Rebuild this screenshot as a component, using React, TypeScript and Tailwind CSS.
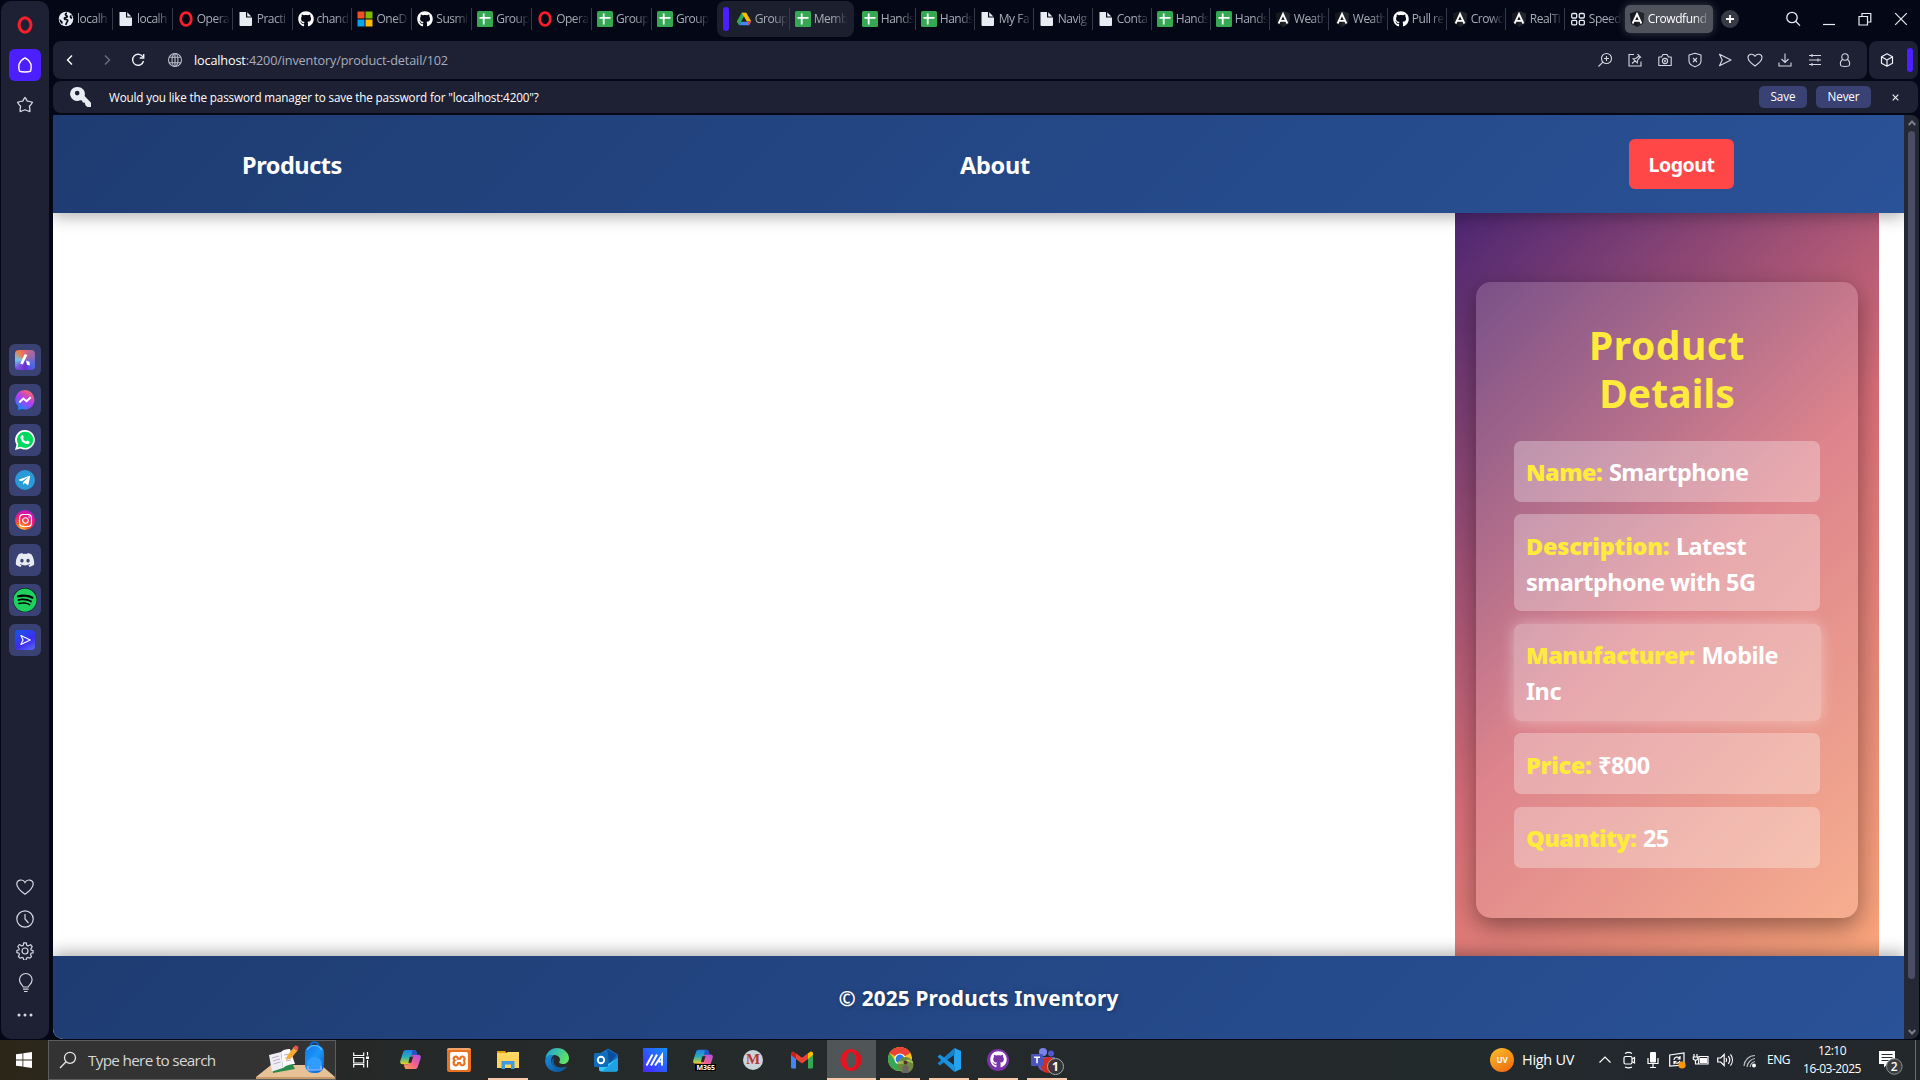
import React from "react";
import {
  FaGithub,
  FaTelegramPlane,
  FaInstagram,
  FaDiscord,
  FaSpotify,
} from "react-icons/fa";
import { SiXampp } from "react-icons/si";

type IconProps = { className?: string };

const OperaMark = ({ className }: IconProps) => (
  <svg className={className} viewBox="0 0 20 20" fill="none">
    <ellipse cx="10" cy="10" rx="6.6" ry="8" stroke="#fa1e2d" strokeWidth="3.4" />
  </svg>
);

const SheetIcon = () => (
  <svg className="size-4 shrink-0" viewBox="0 0 16 16">
    <rect width="16" height="16" rx="1.5" fill="#34a853" />
    <path d="M2.5 6.8h11M6.7 2.5v11" stroke="#fff" strokeWidth="1.8" />
  </svg>
);

const FileIcon = () => (
  <svg className="size-4 shrink-0" viewBox="0 0 16 16" fill="#e8ebf2">
    <path d="M1.500 1h6.500v5.500H14V14a1 1 0 0 1-1 1H2.500a1 1 0 0 1-1-1z" />
    <path d="M9.200 1.200l4.200 4.200H9.200z" />
  </svg>
);

const WorldIcon = () => (
  <svg className="size-4 shrink-0" viewBox="0 0 16 16">
    <circle cx="8" cy="8" r="7.300" fill="#e8ebf2" />
    <path d="M9 2.200c-2 .3-2 2-.4 2.600 1.400.5.300 1.800-1.300 1.900-1.500.1-1 1.800.4 1.800 2 0 2.600 1 1.500 2.300-.9 1-.8 2.200-1.600 3.100M13.500 4.500c-1.500.6-1.600 2.200.6 2.600" stroke="#040716" strokeWidth="1.700" fill="none" />
    <path d="M1.500 7.800l3.200 3-.4 2.400C2.300 11.900 1.500 10 1.500 7.800z" fill="#040716" />
  </svg>
);

const MicrosoftIcon = () => (
  <svg className="size-4 shrink-0" viewBox="0 0 16 16">
    <path fill="#f25022" d="M.5.5h7v7h-7z" />
    <path fill="#7fba00" d="M8.500.5h7v7h-7z" />
    <path fill="#00a4ef" d="M.5 8.500h7v7h-7z" />
    <path fill="#ffb900" d="M8.500 8.500h7v7h-7z" />
  </svg>
);

const DriveIcon = () => (
  <svg className="size-4 shrink-0" viewBox="0 0 16 16">
    <path d="M5.700 1.800h4.600L5.300 10.500 3 14.200.8 10.400z" fill="#34a853" />
    <path d="M5.700 1.800h4.600l5 8.600h-4.600z" fill="#fbbc04" />
    <path d="M5.200 10.400h10L13 14.200H3z" fill="#4285f4" />
    <path d="M10.800 10.400h4.400L13 14.200z" fill="#ea4335" />
    <path d="M8 5.900l2.600 4.500H5.400z" fill="#1c1f2e" />
  </svg>
);

const AngularIcon = () => (
  <svg className="size-4 shrink-0" viewBox="0 0 16 16">
    <path d="M8 0l7.200 2.600-1.100 10L8 16l-6.100-3.400L.8 2.600z" fill="#17191f" />
    <path d="M8 0l7.200 2.600-1.100 10L8 16z" fill="#23252c" />
    <path d="M3.600 12.500L8 3l4.400 9.500M5.300 9.800h5.400" stroke="#fff" strokeWidth="1.800" fill="none" />
  </svg>
);

const SpeedDialIcon = () => (
  <svg className="size-4 shrink-0" viewBox="0 0 16 16" fill="none" stroke="#e8ebf2" strokeWidth="1.300">
    <rect x="1.700" y="2.500" width="5" height="4.500" rx="1" />
    <rect x="9.300" y="2.500" width="5" height="4.500" rx="1" />
    <rect x="1.700" y="9.300" width="5" height="4.500" rx="1" />
    <rect x="9.300" y="9.300" width="5" height="4.500" rx="1" />
  </svg>
);

const GithubIcon = () => <FaGithub className="size-4 shrink-0 text-white" />;

const favicons = {
  world: WorldIcon,
  file: FileIcon,
  opera: () => <OperaMark className="size-4 shrink-0" />,
  github: GithubIcon,
  ms: MicrosoftIcon,
  sheet: SheetIcon,
  drive: DriveIcon,
  angular: AngularIcon,
  speed: SpeedDialIcon,
};

type TabData = { icon: keyof typeof favicons; label: string };

const leftTabs: TabData[] = [
  { icon: "world", label: "localh" },
  { icon: "file", label: "localh" },
  { icon: "opera", label: "Opera" },
  { icon: "file", label: "Practi" },
  { icon: "github", label: "chand" },
  { icon: "ms", label: "OneD" },
  { icon: "github", label: "Susmi" },
  { icon: "sheet", label: "Group" },
  { icon: "opera", label: "Opera" },
  { icon: "sheet", label: "Group" },
  { icon: "sheet", label: "Group" },
];

const rightTabs: TabData[] = [
  { icon: "sheet", label: "Hands" },
  { icon: "sheet", label: "Hands" },
  { icon: "file", label: "My Fa" },
  { icon: "file", label: "Navig" },
  { icon: "file", label: "Conta" },
  { icon: "sheet", label: "Hands" },
  { icon: "sheet", label: "Hands" },
  { icon: "angular", label: "Weath" },
  { icon: "angular", label: "Weath" },
  { icon: "github", label: "Pull re" },
  { icon: "angular", label: "Crowd" },
  { icon: "angular", label: "RealTi" },
  { icon: "speed", label: "Speed" },
];

function Tab({ tab, last, width }: { tab: TabData; last?: boolean; width: string }) {
  const Icon = favicons[tab.icon];
  return (
    <div className={`flex h-[22px] shrink-0 items-center gap-[3px] border-r pl-[5px] ${width} ${last ? "border-transparent" : "border-[#363945]"}`}>
      <Icon />
      <span className="w-[34px] whitespace-nowrap text-[12px] tracking-[-0.5px] text-[#a9acb6] [mask-image:linear-gradient(to_right,black_55%,transparent_98%)]">
        {tab.label}
      </span>
    </div>
  );
}

function TabStrip() {
  return (
    <div className="flex h-[41px] items-start">
      <div className="mt-2 flex">
        {leftTabs.map((t, i) => (
          <Tab key={i} tab={t} width="w-[59.9px]" last={i === leftTabs.length - 1} />
        ))}
      </div>
      <div className="ml-[5px] mt-px flex h-9 w-[137px] items-center rounded-lg bg-[#1c1f2e] pl-1.5">
        <div className="h-6 w-[6px] rounded-full bg-[#4c1fff]" />
        <div className="ml-[2px] flex">
          <Tab tab={{ icon: "drive", label: "Group" }} width="w-[59px]" />
          <Tab tab={{ icon: "sheet", label: "Memb" }} width="w-[60px]" last />
        </div>
      </div>
      <div className="ml-[3px] mt-2 flex">
        {rightTabs.map((t, i) => (
          <Tab key={i} tab={t} width="w-[59px]" last={i === rightTabs.length - 1} />
        ))}
      </div>
      <div className="ml-px mt-[5px] flex h-7 w-[88px] items-center gap-[3px] rounded-[5px] bg-[#50525c] pl-1 shadow-[0_0_10px_rgba(255,255,255,0.22)]">
        <AngularIcon />
        <span className="w-[62px] whitespace-nowrap text-[12px] tracking-[-0.4px] text-white [mask-image:linear-gradient(to_right,black_75%,transparent)]">
          Crowdfund
        </span>
      </div>
      <div className="ml-2 mt-[10px] flex size-[18px] items-center justify-center rounded-full bg-[#373a45]">
        <svg className="size-2.5" viewBox="0 0 10 10" stroke="#fff" strokeWidth="1.800"><path d="M5 1v8M1 5h8" /></svg>
      </div>
      <div className="ml-auto mt-[11px] flex gap-5 pr-[11px] text-[#e8ebf2]">
        <svg className="size-4" viewBox="0 0 16 16" fill="none" stroke="currentColor" strokeWidth="1.300"><circle cx="7" cy="6.500" r="5.200" /><path d="M10.700 10.300l4.300 4.300" /></svg>
        <svg className="size-4" viewBox="0 0 16 16" stroke="currentColor" strokeWidth="1.200"><path d="M2 13.500h12" /></svg>
        <svg className="size-4" viewBox="0 0 16 16" fill="none" stroke="currentColor" strokeWidth="1.200"><path d="M2 5.500h8.500V14H2zM5 5.500V2.500h8.800V11h-3" /></svg>
        <svg className="size-4" viewBox="0 0 16 16" stroke="currentColor" strokeWidth="1.200"><path d="M2.200 2.200l11.600 11.600M13.800 2.200L2.200 13.800" /></svg>
      </div>
    </div>
  );
}

const toolbarIcons: React.ReactNode[] = [
  <><circle cx="9.500" cy="6.500" r="5" /><path d="M5.800 10.200L1.500 14.500M9.500 4v5M7 6.500h5" /></>,
  <><path d="M7 2.500H2v11.500h12V9.500" /><path d="M10.500 2.200l3.500 3.500M12 4L8.800 6.500l-2.600.3 4 4 .4-2.600L13 5.200M8 8.800L5 11.500" /></>,
  <><path d="M1.800 5h2.700L6 2.500h4L11.500 5h2.700v8.500H1.800z" strokeLinejoin="round" /><circle cx="8" cy="9" r="2.600" /><circle cx="8" cy="9" r=".5" /></>,
  <><path d="M8 1.300l6 1.700v6c0 3-3 4.800-6 5.700C5 13.800 2 12 2 9V3z" strokeLinejoin="round" /><path d="M6 6l4 4M10 6l-4 4" /></>,
  <path d="M2.500 2.300L14 8 2.500 13.700 5.200 8z" strokeLinejoin="round" />,
  <path d="M8 14C3 10.500 1 8.300 1 5.500 1 1.800 6 1 8 4.200 10 1 15 1.800 15 5.500 15 8.300 13 10.500 8 14z" />,
  <><path d="M8 1.500v9M4.500 7L8 10.500 11.500 7" /><path d="M2 10.500v3.500h12v-3.500" /></>,
  <><path d="M2 3.500h12M2 8h12M2 12.500h12M5 2v3M11 6.500v3M5 11v3" /></>,
  <><circle cx="8" cy="5" r="3.200" /><path d="M5.500 7.500C3.500 9 3 11 3.600 13.200c.3 1 1.200 1.300 4.400 1.300s4.100-.3 4.400-1.300C13 11 12.500 9 10.500 7.500" /></>,
];

function AddressBar() {
  return (
    <div className="flex h-[38px] gap-[2px] text-[#d5d8e2]">
      <div className="flex w-[1814px] items-center rounded-lg bg-[#1e2133] pl-[9px] pr-[14px]">
        <svg className="size-4" viewBox="0 0 16 16" fill="none" stroke="#fff" strokeWidth="1.400"><path d="M10 3.500L5.500 8l4.500 4.500" /></svg>
        <svg className="ml-[21px] size-4" viewBox="0 0 16 16" fill="none" stroke="#6b6e7c" strokeWidth="1.400"><path d="M6 3.500L10.500 8 6 12.500" /></svg>
        <svg className="ml-[15px] size-4" viewBox="0 0 16 16" fill="none" stroke="#f0f2f8" strokeWidth="1.400"><path d="M13 5.200A5.500 5.500 0 1 0 13.500 9" /><path d="M13.700 2v4H9.700" /></svg>
        <svg className="ml-[21px] size-4" viewBox="0 0 16 16" fill="none" stroke="#b9bcc8" strokeWidth="1.100"><circle cx="8" cy="8" r="6.500" /><ellipse cx="8" cy="8" rx="3" ry="6.500" /><path d="M8 1.500v13M2.200 5.300h11.600M2.200 10.700h11.600" /></svg>
        <div className="ml-[11px] mt-px whitespace-nowrap text-[12.7px] tracking-[-0.16px] text-[#a9adbd]">
          <span className="text-white">localhost</span>:4200/inventory/product-detail/102
        </div>
        <div className="ml-auto flex gap-[14px]">
          {toolbarIcons.map((p, i) => (
            <svg key={i} className="size-4" viewBox="0 0 16 16" fill="none" stroke="currentColor" strokeWidth="1.100">{p}</svg>
          ))}
        </div>
      </div>
      <div className="flex w-[49px] items-center rounded-lg bg-[#1e2133] pl-[10px]">
        <svg className="size-4" viewBox="0 0 16 16" fill="none" stroke="#f0f2f8" strokeWidth="1.200" strokeLinejoin="round"><path d="M8 1.800l5.500 3v6.400L8 14.200l-5.500-3V4.800zM2.500 4.800L8 8l5.500-3.200M8 8v6.200" /></svg>
        <div className="ml-3 h-6 w-[6px] rounded-full bg-[#4c1fff]" />
      </div>
    </div>
  );
}

function PasswordBar() {
  return (
    <div className="mt-[2px] flex h-8 w-[1865px] items-center rounded-lg bg-[#1e2133] pl-[17px] text-white">
      <svg className="size-[22px]" viewBox="0 0 22 22" fill="#e8ebf2">
        <path fillRule="evenodd" d="M8 1a7 7 0 1 0 2.200 13.200l1.800.2.800 2 2 .4.600 2.400 2 1.800h3.600v-4.200L14.600 10A7 7 0 0 0 8 1zm-.8 3.800a2.300 2.300 0 1 1 0 4.600 2.300 2.300 0 0 1 0-4.600z" />
      </svg>
      <span className="ml-[17px] mt-[2px] whitespace-nowrap text-[11.7px] tracking-[-0.155px]">
        Would you like the password manager to save the password for "localhost:4200"?
      </span>
      <button className="ml-auto h-[22px] w-[48px] rounded-[5px] bg-[#3a4274] text-[11.7px] tracking-[-0.1px]">Save</button>
      <button className="ml-[9px] h-[22px] w-[55px] rounded-[5px] bg-[#3a4274] text-[11.7px] tracking-[-0.1px]">Never</button>
      <svg className="ml-[21px] mr-[19px] size-[7px]" viewBox="0 0 7 7" stroke="#e8ebf2" strokeWidth="1.200"><path d="M.7.7l5.600 5.600M6.300.7L.7 6.300" /></svg>
    </div>
  );
}

const sideTile = "flex size-8 items-center justify-center rounded-md bg-[#3a4274]";

function Sidebar() {
  return (
    <div className="ml-px mt-px flex h-[1038px] w-12 flex-col items-center rounded-[10px] bg-[#1e2133]">
      <OperaMark className="mt-[15px] size-[18px]" />
      <div className="mt-[15px] flex size-8 items-center justify-center rounded-md bg-[#4c1fff]">
        <svg className="size-[18px]" viewBox="0 0 18 18" fill="none" stroke="#fff" strokeWidth="1.400" strokeLinejoin="round"><path d="M9 1.800c2.500 1.200 5 3.800 6 6.400.4 2.500.2 5-.5 7-1.800 1-9.200 1-11 0-.7-2-.9-4.500-.5-7C4 5.600 6.500 3 9 1.800z" /></svg>
      </div>
      <svg className="mt-[15px] size-[18px]" viewBox="0 0 18 18" fill="none" stroke="#d5d8e2" strokeWidth="1.300" strokeLinejoin="round"><path d="M9 1.500c1 1 1.700 2.300 2.200 3.600 1.600.1 3.500.5 5.300 1.200-.8 1.500-1.900 2.800-3.100 4 .4 1.700.6 3.500.5 5.200-1.700-.3-3.400-.9-4.900-1.700-1.500.8-3.200 1.400-4.900 1.700-.1-1.700.1-3.500.5-5.200-1.200-1.200-2.300-2.500-3.100-4 1.800-.7 3.700-1.100 5.300-1.200C7.300 3.800 8 2.500 9 1.500z" /></svg>

      <div className="mt-[230px] flex flex-col gap-2">
        <div className={sideTile}>
          <div className="flex size-5 items-center justify-center rounded bg-[conic-gradient(from_0deg,#d9667a,#4a6ae8_35%,#6a2fd0_50%,#7a4fe0_62%,#6ec9e8_75%,#f07a45_90%,#d9667a)]">
            <svg className="size-4" viewBox="0 0 16 16"><path d="M9 2.500L4.500 12" stroke="#fff" strokeWidth="2.800" /><path d="M9 8.500l3.500 1.200.3 3.800-2.800-.8z" fill="#fff" /></svg>
          </div>
        </div>
        <div className={sideTile}>
          <svg className="size-5" viewBox="0 0 20 20">
            <defs><linearGradient id="msgr" x1="0.800" y1="0" x2="0.200" y2="1"><stop offset="0" stopColor="#ff6a5c" /><stop offset=".5" stopColor="#b03cf5" /><stop offset="1" stopColor="#0b8cff" /></linearGradient></defs>
            <path d="M10 0a9.700 9.700 0 1 1-3 19l-3.800 1V16.600A9.700 9.700 0 0 1 10 0z" fill="url(#msgr)" />
            <path d="M4.300 12.500l3.900-4 3.400 2.600 4.200-3.800" stroke="#fff" strokeWidth="2" fill="none" />
          </svg>
        </div>
        <div className={sideTile}>
          <svg className="size-5" viewBox="0 0 20 20">
            <path d="M10.200 0a9.800 9.800 0 1 1-4.700 18.500L0 20l1.500-5.200A9.800 9.800 0 0 1 10.200 0z" fill="#fff" />
            <path d="M10.200 1.700a8.100 8.100 0 1 1-4.300 15L2.500 17.600l.9-3.300A8.100 8.100 0 0 1 10.200 1.700z" fill="#00d95f" />
            <path d="M7 5.200c.6-.3.900 0 1.100.5l.6 1.500c.2.500-.6 1-.7 1.400.6 1.400 1.700 2.400 3.200 3 .5-.1.900-1.200 1.400-1l1.700.9c.5.3.3 1.200-.1 1.700-.8.900-2 1.100-3.200.7C8 13 6 10.800 5.600 8.200c-.1-1.200.4-2.500 1.400-3z" fill="#fff" />
          </svg>
        </div>
        <div className={sideTile}>
          <div className="flex size-5 items-center justify-center rounded-full bg-[#2a9bd7]"><FaTelegramPlane className="-ml-px size-[13px] text-white" /></div>
        </div>
        <div className={sideTile}>
          <div className="flex size-5 items-center justify-center rounded-full bg-[radial-gradient(circle_at_30%_100%,#ffcc40_0%,#ff5a2c_30%,#e8178a_60%,#9b1ff0_100%)]"><FaInstagram className="size-[15px] text-white" /></div>
        </div>
        <div className={sideTile}><FaDiscord className="size-5 text-[#e8ebf2]" /></div>
        <div className={sideTile}>
          <div className="flex size-6 items-center justify-center rounded-full bg-black"><FaSpotify className="size-6 text-[#1ed15e]" /></div>
        </div>
        <div className={sideTile}>
          <div className="flex size-5 items-center justify-center rounded bg-[linear-gradient(150deg,#1757f0,#3d2cf0_60%,#5b6ef5)]">
            <svg className="size-3" viewBox="0 0 16 16" fill="none" stroke="#fff" strokeWidth="1.500" strokeLinejoin="round"><path d="M2.500 2L15 8 2.500 14 5.400 8z" /></svg>
          </div>
        </div>
      </div>

      <div className="mb-[15px] mt-auto flex flex-col items-center gap-[14px] text-[#d5d8e2]">
        <svg className="size-[18px]" viewBox="0 0 18 18" fill="none" stroke="currentColor" strokeWidth="1.200"><path d="M9 16.300C3 12 .8 9.500.8 6 .8 1.600 7 .5 9 4.500c2-4 8.200-2.900 8.200 1.500 0 3.500-2.200 6-8.200 10.300z" /></svg>
        <svg className="size-[18px]" viewBox="0 0 18 18" fill="none" stroke="currentColor" strokeWidth="1.200"><circle cx="9" cy="9" r="8.200" /><path d="M9 4v5l3.500 4" /></svg>
        <svg className="size-[18px]" viewBox="0 0 18 18" fill="none" stroke="currentColor" strokeWidth="1.200" strokeLinejoin="round"><circle cx="9" cy="9" r="3" /><path d="M7.300 3.300L7.700.9h2.600l.4 2.400 1.300.7 2.600-1.300 1.600 2-1.400 2.200.3 1.300 2 .3v2.400l-2 .3-.6 1.300 1 2-1.700 1.700-2.200-.8-1 .6-.4 2H7.700l-.4-2-1-.6-2.300.8-1.600-1.700 1-2L2.900 11l-2-.3V8.300L2.900 8l.3-1.300L1.800 4.500l1.600-2L6 4z" /></svg>
        <svg className="size-[18px] overflow-visible" viewBox="0 0 18 18" fill="none" stroke="currentColor" strokeWidth="1.200"><path d="M7.200 13C7 11 3.500 10 3.500 5.800a6.300 6.300 0 0 1 12.600 0C16.100 10 12.500 11 12.300 13zM7 15.200h5.600M8 17.500h3.600" /></svg>
        <svg className="size-[18px]" viewBox="0 0 18 18" fill="currentColor"><circle cx="3" cy="9" r="1.500" /><circle cx="9" cy="9" r="1.500" /><circle cx="15" cy="9" r="1.500" /></svg>
      </div>
    </div>
  );
}

const details = [
  { label: "Name:", value: "Smartphone", labelClass: "tracking-[-0.55px]" },
  { label: "Description:", value: "Latest smartphone with 5G", labelClass: "tracking-[-0.25px]" },
  { label: "Manufacturer:", value: "Mobile Inc", labelClass: "tracking-[-0.5px]", active: true },
  { label: "Price:", value: "₹800", labelClass: "tracking-[-0.35px]" },
  { label: "Quantity:", value: "25", labelClass: "tracking-[-0.55px]" },
];

function ProductPage() {
  return (
    <div className="flex h-[924px] w-[1851px] flex-col overflow-hidden rounded-bl-[10px] bg-white font-['Noto_Sans',sans-serif] font-bold text-white">
      <header className="z-10 flex h-[98px] shrink-0 items-center bg-[linear-gradient(135deg,#1e3c72,#2a5298)] pl-[189px] shadow-[0_4px_15px_rgba(0,0,0,0.3)]">
        <a className="w-[100px] whitespace-nowrap pt-1 text-[23.5px] tracking-[-0.45px]">Products</a>
        <a className="ml-[618px] w-[72px] whitespace-nowrap pt-1 text-[23.5px] tracking-[-0.25px]">About</a>
        <button className="ml-[597px] h-[50px] w-[105px] rounded-md bg-[#ff4747] pt-px text-[19.5px] tracking-[-0.45px]">Logout</button>
      </header>
      <main className="flex h-[743px] shrink-0 justify-end overflow-hidden pr-[25px]">
        <div className="-mt-[75px] flex h-[924px] w-[424px] items-center justify-center bg-[linear-gradient(135deg,#3a1c71,#d76d77,#ffaf7b)]">
          <section className="h-[636px] w-[382px] rounded-[15px] bg-white/[0.16] px-[38px] pt-[39px] shadow-[0_8px_25px_rgba(0,0,0,0.4)]">
            <h1 className="text-center text-[39px] leading-[48px] text-[#ffeb3b]">
              <span className="tracking-[0.5px]">Product</span>
              <br />
              <span className="tracking-[0.1px]">Details</span>
            </h1>
            <div className="mt-[24px] flex flex-col gap-[12.7px]">
              {details.map((d) => (
                <p
                  key={d.label}
                  className={`rounded-[7px] px-[12px] pb-[11.4px] pt-[13.4px] text-[23.5px] leading-[36px] tracking-[-0.52px] ${
                    d.active ? "mr-[-1px] bg-white/30 shadow-[0_0_15px_rgba(255,255,255,0.4)]" : "bg-white/30"
                  }`}
                >
                  <span className={`font-black text-[#ffeb3b] ${d.labelClass}`}>{d.label}</span> <span className="pl-px">{d.value}</span>
                </p>
              ))}
            </div>
          </section>
        </div>
      </main>
      <footer className="z-10 flex h-[83px] shrink-0 items-center justify-center bg-[linear-gradient(135deg,#1e3c72,#2a5298)] pt-[2px] text-[20.800px] tracking-[0.18px] shadow-[0_-4px_15px_rgba(0,0,0,0.3)] [text-shadow:1px_1px_5px_rgba(0,0,0,0.3)]">
        © 2025 Products Inventory
      </footer>
    </div>
  );
}

function Scrollbar() {
  return (
    <div className="flex h-[924px] w-[15px] flex-col items-center rounded-r-lg bg-[#252936]">
      <svg className="mt-1 size-2" viewBox="0 0 8 8" fill="none" stroke="#7d7f86" strokeWidth="2"><path d="M.7 6L4 2.500 7.300 6" /></svg>
      <div className="mt-1 h-[848px] w-[7px] rounded-full bg-[#4a4e64]" />
      <svg className="mb-[3px] mt-auto size-2" viewBox="0 0 8 8" fill="none" stroke="#7d7f86" strokeWidth="2"><path d="M.7 2L4 5.500 7.300 2" /></svg>
    </div>
  );
}

const CopilotShape = ({ className }: IconProps) => (
  <svg className={className} viewBox="0 0 24 24">
    <defs>
      <linearGradient id="cpA" x1="0" y1="0" x2="0" y2="1"><stop offset="0" stopColor="#1d7fe8" /><stop offset=".5" stopColor="#2bb0b5" /><stop offset="1" stopColor="#e8d21a" /></linearGradient>
      <linearGradient id="cpB" x1="1" y1="0" x2="0" y2="1"><stop offset="0" stopColor="#b04df0" /><stop offset=".5" stopColor="#f0608f" /><stop offset="1" stopColor="#ffa24a" /></linearGradient>
    </defs>
    <path d="M7.500 2h8c2 0 2.500 1.200 3 3l.5 2h-3c-2 0-2.700.8-3.200 2.500l-1.500 5C10.600 16.700 9.800 17 8 17H4C1.500 17 .7 15.500 1.500 13L4.300 4.500C4.900 2.700 5.700 2 7.500 2z" fill="url(#cpA)" />
    <path d="M15.500 7H20c2.500 0 3.300 1.500 2.500 4l-2.800 8.500c-.6 1.800-1.400 2.500-3.200 2.500h-8c-2 0-2.600-1-3-3l-.4-2H8c2 0 2.700-.8 3.200-2.500l1.500-5C13.200 7.700 13.700 7 15.500 7z" fill="url(#cpB)" />
    <path d="M14 2.200h1.500c2 0 2.500 1.200 3 3L19 7h-3.500c-1 0-1.800.3-2.300 1z" fill="#2352c9" />
    <path d="M11.200 9h4.500c-.8.300-1.200.8-1.500 1.800l-1.400 4.500h-3z" fill="#26292a" />
  </svg>
);

const taskbarApps: { icon: React.ReactNode; open?: boolean; active?: boolean }[] = [
  { icon: <CopilotShape className="size-[23px]" /> },
  { icon: <div className="flex size-6 items-center justify-center rounded-[2px] border-t-2 border-[#f2a368] bg-[#e8701f]"><SiXampp className="size-[18px] text-white" /></div> },
  {
    open: true,
    icon: (
      <svg className="size-6" viewBox="0 0 24 24"><path d="M1 3h8l2 2.500H1z" fill="#e8a40c" /><path d="M1 5.200h22V20H1z" fill="#ffd35c" /><path d="M1 5.200h9L12 4h11v3H1z" fill="#ffd968" /><path d="M5.500 13h13v8H15v-4.500H9V21H5.500z" fill="#3d9be0" /></svg>
    ),
  },
  {
    icon: (
      <svg className="size-6" viewBox="0 0 24 24">
        <defs>
          <linearGradient id="edA" x1="0" y1="0" x2="1" y2=".4"><stop offset="0" stopColor="#1b9de0" /><stop offset="1" stopColor="#5fe06a" /></linearGradient>
          <linearGradient id="edB" x1="0" y1="0" x2="1" y2="1"><stop offset="0" stopColor="#1b8de0" /><stop offset="1" stopColor="#0c4f94" /></linearGradient>
        </defs>
        <path d="M.3 11C1 4.500 6 0 12 0c7 0 12 5 12 10 0 4-3 6-6 6-2.500 0-4.500-1-3.500-2.500C16 11 14 7 9.500 7 5 7 1.500 8.500.3 11z" fill="url(#edA)" />
        <path d="M.2 12C.8 8.500 5 6.500 9 7c-2 1.300-3.500 4-2.500 7.500C7.500 19 13 21.500 21.500 19 19.500 22 16 24 12 24 5 24-.3 18.500.2 12z" fill="url(#edB)" />
        <path d="M10 9.500c-3 3-1.500 8.500 4 9.800 3 .6 6 .2 8-1-1 2.200-4 3.600-7 3.400C8 21 5 15 7.500 11z" fill="#12619f" />
      </svg>
    ),
  },
  {
    icon: (
      <svg className="size-6" viewBox="0 0 24 24"><path d="M4 6.500L14 .5l10 6v4l-10 6L4 11z" fill="#1272c4" /><path d="M13 1l10 6-8 9z" fill="#0a4f9e" /><path d="M5 11l9 5 10-6v11.500c0 1-.8 2-2 2H7c-1 0-2-.8-2-2z" fill="#36c5f4" /><path d="M24 10L8 23.500h14c1.200 0 2-1 2-2z" fill="#1fa2e5" /><rect x="0" y="5" width="14" height="14" rx="1.500" fill="#0f6cbd" /><circle cx="7" cy="12" r="3.200" fill="none" stroke="#fff" strokeWidth="1.900" /></svg>
    ),
  },
  {
    icon: (
      <svg className="size-6" viewBox="0 0 24 24">
        <defs><linearGradient id="mA" x1="1" y1="0" x2="0" y2="1"><stop offset="0" stopColor="#0f93ff" /><stop offset="1" stopColor="#4a22ff" /></linearGradient></defs>
        <path d="M0 0h24v24H0z" fill="url(#mA)" /><path d="M3.500 17.500L9.500 6.500M8 17.500l6-11M12 17.500L19 7v10.500M15.500 13.500h3.500" stroke="#fff" strokeWidth="2" fill="none" />
      </svg>
    ),
  },
  {
    icon: (
      <div className="flex flex-col items-end">
        <CopilotShape className="mr-0.5 size-[22px]" />
        <span className="mt-[-6px] bg-black px-px text-[7px] font-bold leading-[7px] text-white">M365</span>
      </div>
    ),
  },
  { icon: <div className="flex size-[20px] items-center justify-center rounded-full bg-[#c9d3dc] font-['Liberation_Serif',serif] text-[15px] font-bold leading-none text-[#b3392f]">M</div> },
  {
    icon: (
      <svg className="size-[22px]" viewBox="0 0 22 22"><path d="M0 5l5 4v10.500H1.500C.6 19.500 0 19 0 18z" fill="#4285f4" /><path d="M17 9l5-4v13c0 1-.6 1.500-1.500 1.500H17z" fill="#34a853" /><path d="M17 4.200l2-1.300c1.500-1 3 .1 3 1.600V6l-5 4z" fill="#fbbc04" /><path d="M5 4.200l6 4.600 6-4.600V10l-6 4.600L5 10z" fill="#ea4335" /><path d="M5 4.200L3 2.900C1.500 1.900 0 3 0 4.500V6l5 4z" fill="#c5221f" /></svg>
    ),
  },
  {
    open: true,
    active: true,
    icon: (
      <svg className="size-6" viewBox="0 0 24 24"><path fillRule="evenodd" d="M12 1c6 0 10.500 5 10.500 11S18 23 12 23 1.500 18 1.500 12 6 1 12 1zm0 3c-2.800 0-4.500 3.800-4.500 8s1.700 8 4.500 8 4.500-3.800 4.500-8-1.700-8-4.500-8z" fill="#e8141f" /><path d="M18.500 4A11 11 0 0 1 12 23c4-1 6.500-5 6.500-11 0-3.500-1.500-6.500-3.500-8z" fill="#c9101c" fillOpacity=".5" /></svg>
    ),
  },
  {
    open: true,
    icon: (
      <svg className="size-[27px] overflow-visible" viewBox="0 0 27 27">
        <circle cx="13" cy="13" r="12" fill="#fbc116" /><path d="M13 13L2.600 7A12 12 0 0 1 23.400 7z" fill="#ea4335" /><path d="M2.600 7A12 12 0 0 0 12 25l5-9.500-8 0z" fill="#34a853" /><circle cx="13" cy="13" r="5.600" fill="#fff" /><circle cx="13" cy="13" r="4.400" fill="#2b7de9" />
        <circle cx="18.500" cy="19" r="8" fill="#6e8a3c" /><path d="M11 17.500c3-3 5 1 8-2s5 1 7 1" stroke="#a9c05a" strokeWidth="2" fill="none" /><circle cx="18.500" cy="16.500" r="2" fill="#4a3526" /><path d="M15.500 27v-6c0-2.500 6-2.500 6 0v6z" fill="#6d6268" />
      </svg>
    ),
  },
  {
    open: true,
    icon: (
      <svg className="size-6" viewBox="0 0 24 24"><path fillRule="evenodd" d="M17.500 0L24 3v18l-6.500 3-.5-6.500V6.500z" fill="#24a4f0" /><path d="M17.500 0L.5 15.200l2.500 2.300L18 6.200z" fill="#1583cc" /><path d="M17.500 24L.5 8.800 3 6.500 18 17.800z" fill="#1b92de" /></svg>
    ),
  },
  { open: true, icon: <div className="flex size-[22px] items-center justify-center rounded-full bg-[#7b33a8]"><FaGithub className="size-[17px] text-white" /></div> },
  {
    open: true,
    icon: (
      <svg className="size-8 overflow-visible" viewBox="0 0 32 32">
        <circle cx="12" cy="8" r="4" fill="#7b83eb" /><circle cx="20" cy="9.500" r="3" fill="#5059c9" /><path d="M7 13h17v8c0 4-4 7-8.500 7S7 25 7 21z" fill="#5b63d3" />
        <circle cx="17.500" cy="21" r="8" fill="#d22d22" /><rect x="0" y="10" width="12" height="12" rx="1" fill="#4b53bc" /><path d="M3 13.300h6M6 13.300v6" stroke="#fff" strokeWidth="1.600" />
        <circle cx="24.500" cy="22.500" r="8" fill="#33373a" fillOpacity=".85" stroke="#a5a8aa" />
        <text x="24.500" y="27" textAnchor="middle" fontSize="12" fontWeight="700" fill="#fff" fontFamily="Open Sans, sans-serif">1</text>
      </svg>
    ),
  },
];

function Taskbar() {
  return (
    <div className="flex h-10 items-center bg-[linear-gradient(to_right,#2c2618_0px,#2b271b_48px,#252827_340px,#252a2b_700px,#232a2c_1500px,#23272f_1700px,#23282a_1920px)] text-white">
      <div className="flex w-12 items-center justify-center">
        <svg className="size-4" viewBox="0 0 16 16" fill="#fff"><path d="M0 2.300L6.500 1.400v6.200H0zM7.300 1.300L16 0v7.600H7.300zM0 8.400h6.500v6.200L0 13.700zM7.300 8.400H16V16l-8.700-1.200z" /></svg>
      </div>
      <div className="flex h-10 w-[288px] items-center border border-[#5e5e5e] bg-[#333] pl-[10px]">
        <svg className="size-[18px]" viewBox="0 0 18 18" fill="none" stroke="#e6e6e6" strokeWidth="1.300"><circle cx="11" cy="6.800" r="5.500" /><path d="M7 10.700L1 17" /></svg>
        <span className="ml-[11px] mt-px whitespace-nowrap text-[15.300px] tracking-[-0.7px] text-[#d8d8d8]">Type here to search</span>
        <svg className="ml-auto h-[38px] w-[79px]" viewBox="0 0 79 38">
          <defs><linearGradient id="bag" x1="0" y1="0" x2="1" y2="1"><stop offset="0" stopColor="#1277e8" /><stop offset=".5" stopColor="#1a97fa" /><stop offset="1" stopColor="#0a55c4" /></linearGradient></defs>
          <path d="M15 24h50l14 12v2H0v-2z" fill="#e8c296" /><path d="M0 36h79v2H0z" fill="#c79a6b" />
          <path d="M14 15l3 17 22-4-3-6z" fill="#2b8a4a" /><path d="M13 14l12-3 2 16-11 3.500z" fill="#f1edf6" /><path d="M25 11c3-3 7-3 9-3l5 15c-5 0-8 1-12 4z" fill="#faf8fc" />
          <path d="M16 17l7-2M17 20l7-2M17.500 23l7-2M28 14l6-1M29 17l6-1M30 20l5-1" stroke="#a9a2b8" strokeWidth=".8" />
          <path d="M30 19l1.500-4.500L38 6l4 3-7 8.500z" fill="#fbab2c" /><path d="M37 7l2-2.300c1-1.100 4.300 1.200 3.400 2.500L41 9.700z" fill="#e8534a" />
          <path d="M54.500 5c0-5 8-5 8 0" stroke="#0b63d1" strokeWidth="2" fill="none" /><rect x="49" y="4" width="19" height="28" rx="8" fill="url(#bag)" /><path d="M51 9c4-6 11-6 15 0" stroke="#62c4ff" strokeWidth="1.200" fill="none" /><path d="M51 22c2-8 13-8 15 0v7H51z" fill="#2f9dff" /><path d="M52 25v4h13v-4" stroke="#a9b5ff" strokeWidth="1.200" fill="none" />
        </svg>
      </div>
      <div className="flex w-[49.500px] items-center justify-center">
        <svg className="size-4" viewBox="0 0 16 16" fill="none" stroke="#fff" strokeWidth="1.200"><path d="M.7.5v3h10v-3M.7 5.500h10v5.500H.7zM.7 15.500v-3h10v3M14.500 0v3.500M14.500 8v7.500" /><path d="M13 4.500h3v2.500h-3z" fill="#fff" stroke="none" /></svg>
      </div>
      <div className="flex h-10">
        {taskbarApps.map((a, i) => (
          <div key={i} className={`flex h-10 w-[49px] flex-col items-center ${a.active ? "bg-[#505557] bg-clip-content" : ""}`}>
            <div className="flex h-[38px] items-center justify-center pt-px">{a.icon}</div>
            <div className={`h-[2px] ${a.active ? "w-full" : "w-10"} ${a.open ? "bg-[#f9c9a8]" : ""}`} />
          </div>
        ))}
      </div>
      <div className="ml-auto flex h-10 items-center">
        <div className="flex size-6 items-center justify-center rounded-full bg-[linear-gradient(150deg,#f8c02a,#f0660e)] text-[8px] font-bold">UV</div>
        <span className="ml-[8px] w-[71px] whitespace-nowrap text-[14.500px] tracking-[-0.3px]">High UV</span>
        <div className="flex">
          {[
            <path d="M2.500 10.500L8 5l5.500 5.500" />,
            <><rect x="3" y="4.500" width="8" height="7.500" rx="1.500" /><path d="M11 7l2.500-1.500v5.500L11 9.500M4 1.500c2-1.200 5-1.200 7 0M4 15c2 1 5 1 7 0" /></>,
            <><rect x="5" y="0" width="6" height="10.500" rx="1" fill="#fff" stroke="none" /><path d="M3 6v5.500h10V6M8 12v3.500M5 15.500h6" /></>,
            <><path d="M.7 3L15 1v12L.7 14z" /><path d="M5 8c0-3 4-4 6-1.500M11 4v3H8.500M11 9c-1 2.500-4 3-6 .8M5 12.300V9.500h2.500" /><circle cx="13" cy="13" r="3.600" fill="#ff9800" stroke="none" /></>,
            <><path d="M6 4.500h9v7.500H5.500z" /><path d="M7.500 6.500h6v4h-6z" fill="#fff" /><path d="M1 2v3M4 2v3M.3 5h4.500v2.200L2.500 8.500.3 7.200zM2.500 8v4H5" /></>,
            <path d="M.7 6h3l3.500-3.500v11L3.700 10h-3zM9 6c.8 1.200.8 2.800 0 4M11.300 4.200c1.700 2.200 1.700 5.400 0 7.600M13.500 2.300c2.500 3.300 2.500 8 0 11.300" />,
            <><path d="M3 14C3.500 8 8 3.500 14 3.500M6 15c.5-4.500 4-8 8-8.500M9 15c.5-2.500 2.500-5 5-5.500" stroke="#b9bcbe" /><circle cx="13" cy="13.500" r="2" fill="#fff" stroke="none" /></>,
          ].map((p, i) => (
            <div key={i} className="flex w-6 justify-center">
              <svg className="size-4 overflow-visible" viewBox="0 0 16 16" fill="none" stroke="#fff" strokeWidth="1.200">{p}</svg>
            </div>
          ))}
        </div>
        <span className="ml-[6px] w-[36px] text-[12px] tracking-[-0.5px]">ENG</span>
        <div className="flex w-[58px] flex-col items-center whitespace-nowrap text-[12px] leading-[18px] tracking-[-0.48px]">
          <span>12:10</span>
          <span>16-03-2025</span>
        </div>
        <svg className="ml-[17px] size-7 overflow-visible" viewBox="0 0 28 28">
          <path d="M1 5h16v13H9.500L6 21.500V18H1z" fill="#fff" /><path d="M3.500 8.500h11M3.500 11.500h11M3.500 14.500h7" stroke="#2a2d30" strokeWidth="1.200" />
          <circle cx="16.300" cy="20.500" r="7.800" fill="#3a3d40" stroke="#8d9092" /><text x="16.300" y="25" textAnchor="middle" fontSize="12" fontWeight="600" fill="#fff" fontFamily="Open Sans, sans-serif">2</text>
        </svg>
        <div className="ml-[9px] mr-1 h-10 w-px bg-[#6a6d70]" />
      </div>
    </div>
  );
}

export default function App() {
  return (
    <div className="flex h-[1080px] w-[1920px] flex-col overflow-hidden bg-[#040716] font-['Open_Sans',sans-serif]">
      <div className="flex h-[1040px]">
        <Sidebar />
        <div className="ml-1 flex w-[1867px] flex-col">
          <TabStrip />
          <AddressBar />
          <PasswordBar />
          <div className="mt-[2px] flex">
            <ProductPage />
            <Scrollbar />
          </div>
        </div>
      </div>
      <Taskbar />
    </div>
  );
}
